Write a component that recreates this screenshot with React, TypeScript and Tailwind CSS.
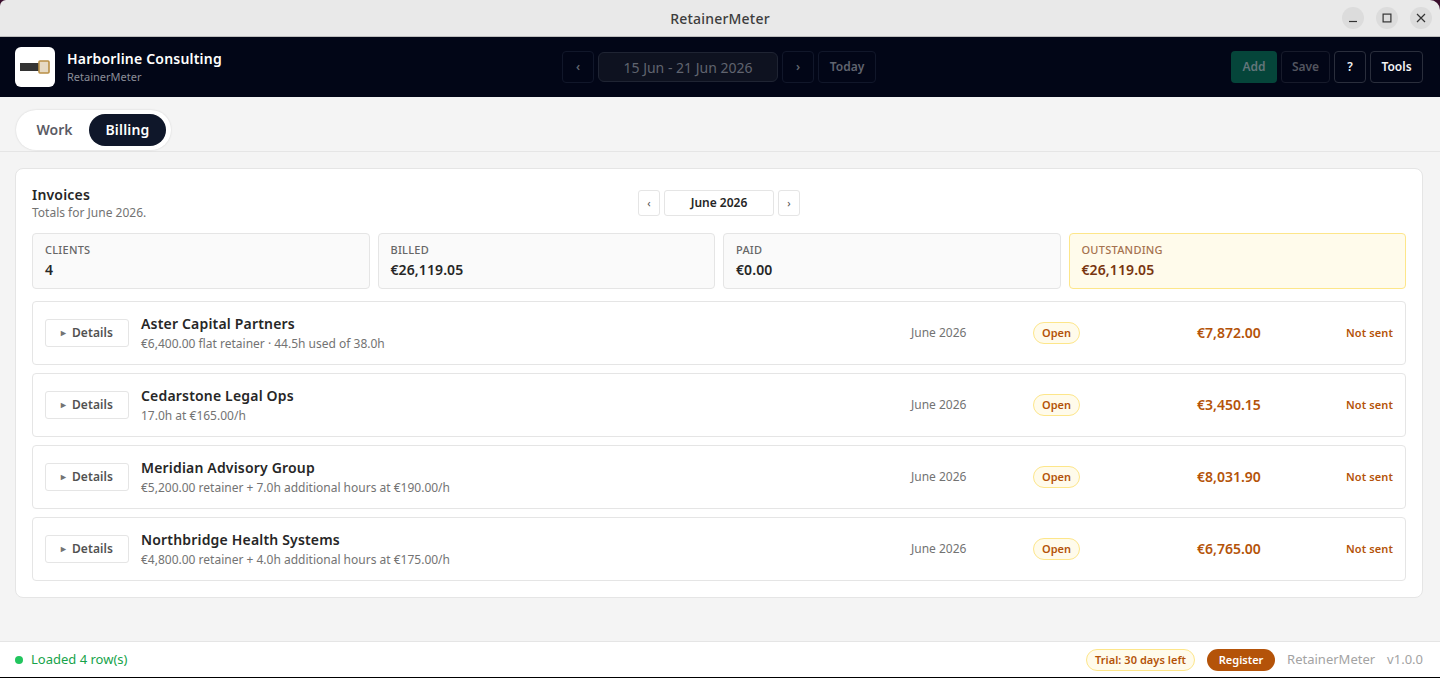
const invoices = [
  { name: 'Aster Capital Partners', detail: '€6,400.00 flat retainer · 44.5h used of 38.0h', amount: '€7,872.00' },
  { name: 'Cedarstone Legal Ops', detail: '17.0h at €165.00/h', amount: '€3,450.15' },
  { name: 'Meridian Advisory Group', detail: '€5,200.00 retainer + 7.0h additional hours at €190.00/h', amount: '€8,031.90' },
  { name: 'Northbridge Health Systems', detail: '€4,800.00 retainer + 4.0h additional hours at €175.00/h', amount: '€6,765.00' },
]

function StatCard({ label, value }: { label: string; value: string }) {
  return (
    <div className="flex-1 h-[56px] rounded-[4px] border border-[#e5e5e5] bg-[#fafafa] pl-[12px] pt-[8px]">
      <div className="text-[11px] leading-[16px] font-medium tracking-[0.25px] text-[#666666]">{label}</div>
      <div className="text-[14px] leading-[20px] mt-[2px] font-semibold tracking-[0.1px] text-[#262626]">{value}</div>
    </div>
  )
}

function InvoiceRow({ name, detail, amount }: { name: string; detail: string; amount: string }) {
  return (
    <div className="flex items-center h-[64px] rounded-[4px] border border-[#e5e5e5] bg-white pl-[12px] pr-[12px]">
      <button className="flex items-center justify-center gap-[4px] w-[84px] h-[28px] pr-[2px] rounded-[3px] border border-[#e5e5e5] bg-white text-[12px] font-semibold tracking-[0.1px] text-[#525252]">
        <span className="text-[9px] text-[#737373]">►</span>
        Details
      </button>
      <div className="ml-[12px] flex-1">
        <div className="text-[14px] leading-[18px] font-semibold tracking-[0.18px] text-[#262626]">{name}</div>
        <div className="text-[12px] leading-[16px] mt-[3px] text-[#737373]">{detail}</div>
      </div>
      <div className="w-[122px] text-[12px] text-[#737373]">June 2026</div>
      <div className="flex w-[164px]">
        <span className="inline-flex items-center h-[22px] px-[8px] rounded-full border border-[#fde68a] bg-[#fffbeb] text-[11px] font-semibold text-[#b45309]">
          Open
        </span>
      </div>
      <div className="w-[112px] text-[14px] leading-[20px] font-semibold text-[#b45309] whitespace-nowrap">{amount}</div>
      <div className="w-[84px] text-[11px] font-semibold tracking-[0.1px] text-[#b45309] text-right whitespace-nowrap">Not sent</div>
    </div>
  )
}

export default function App() {
  return (
    <div className="relative flex flex-col w-[1440px] h-[678px] overflow-hidden bg-[#3a0d2c] font-['Noto_Sans',sans-serif]">
      {/* Window title bar */}
      <div className="relative flex items-center justify-center h-[37px] shrink-0 rounded-tl-[6px] rounded-tr-[10px] bg-[#e9e9e9] border-b border-[#bdbdbd]">
        <span className="text-[14px] font-medium tracking-[0.2px] text-[#3d3d3d]">RetainerMeter</span>
        <div className="absolute right-[8px] top-[7px] flex gap-[12px]">
          <div className="flex items-center justify-center w-[22px] h-[22px] rounded-full bg-[#dcdcdc]">
            <svg width="12" height="12" viewBox="0 0 12 12" fill="none" stroke="#333333" strokeWidth="1.2">
              <path d="M2 9.5H10" />
            </svg>
          </div>
          <div className="flex items-center justify-center w-[22px] h-[22px] rounded-full bg-[#dcdcdc]">
            <svg width="12" height="12" viewBox="0 0 12 12" fill="none" stroke="#333333" strokeWidth="1.2">
              <rect x="2.1" y="2.1" width="7.8" height="7.8" />
            </svg>
          </div>
          <div className="flex items-center justify-center w-[22px] h-[22px] rounded-full bg-[#dcdcdc]">
            <svg width="12" height="12" viewBox="0 0 12 12" fill="none" stroke="#333333" strokeWidth="1.2">
              <path d="M2 2L10 10M10 2L2 10" />
            </svg>
          </div>
        </div>
      </div>

      {/* App header */}
      <div className="relative flex items-center justify-between h-[60px] shrink-0 bg-[#020617] px-[15px] pr-[17px]">
        <div className="flex items-center gap-[12px]">
          <div className="flex items-center justify-center w-[40px] h-[40px] rounded-[6px] bg-white">
            <svg width="30" height="14" viewBox="0 0 30 14">
              <rect x="0" y="3" width="20" height="8" fill="#333333" />
              <rect x="19" y="1" width="10" height="12" rx="1" fill="#e6d9c3" stroke="#b98f45" strokeWidth="1.6" />
            </svg>
          </div>
          <div>
            <div className="text-[14px] leading-[20px] font-semibold tracking-[0.2px] text-white">Harborline Consulting</div>
            <div className="text-[11px] leading-[16px] text-[#8a8d97]">RetainerMeter</div>
          </div>
        </div>

        <div className="absolute left-[562px] top-[14px] flex items-center gap-[4px]">
          <button className="w-[32px] h-[32px] rounded-[4px] border border-[#11172a] text-[12px] font-semibold text-[#60646f]">‹</button>
          <div className="flex items-center justify-center w-[180px] h-[30px] rounded-[6px] border border-[#1f2433] bg-[#0e1220] text-[14px] text-[#60646f]">
            15 Jun - 21 Jun 2026
          </div>
          <button className="w-[32px] h-[32px] rounded-[4px] border border-[#11172a] text-[12px] font-semibold text-[#60646f]">›</button>
          <button className="w-[58px] h-[32px] rounded-[4px] border border-[#11172a] text-[12px] font-semibold text-[#60646f]">Today</button>
        </div>

        <div className="flex items-center gap-[4px]">
          <button className="w-[46px] h-[32px] rounded-[4px] bg-[#05453a] text-[12px] font-semibold text-[#63767a]">Add</button>
          <button className="w-[49px] h-[32px] rounded-[4px] border border-[#171b2b] text-[12px] font-semibold text-[#52555f]">Save</button>
          <button className="w-[32px] h-[32px] rounded-[4px] border border-[#2a2e3c] text-[12px] font-semibold text-[#f3f4f6]">?</button>
          <button className="w-[53px] h-[32px] rounded-[4px] border border-[#2a2e3c] text-[12px] font-semibold text-[#f3f4f6]">Tools</button>
        </div>
      </div>

      {/* Tabs */}
      <div className="h-[55px] shrink-0 bg-[#f4f4f4] border-b border-[#e5e5e5] pl-[16px] pt-[13px]">
        <div className="flex items-center h-[40px] w-[155px] rounded-full bg-white shadow-[0_0_2px_rgba(0,0,0,0.15)] pl-[4px]">
          <div className="flex items-center justify-center w-[69px] pb-[2px] text-[14px] font-semibold text-[#5b5b65]">Work</div>
          <div className="flex items-center justify-center w-[77px] h-[32px] pb-[2px] rounded-full bg-[#0f172a] text-[14px] font-semibold tracking-[0.2px] text-white">Billing</div>
        </div>
      </div>

      {/* Billing content */}
      <div className="flex-1 bg-[#f4f4f4] px-[15px] pr-[17px] pt-[16px]">
        <div className="h-[430px] rounded-[8px] border border-[#e5e5e5] bg-white px-[16px] pt-[16px]">
          <div className="relative h-[48px]">
            <div className="text-[14px] leading-[20px] font-semibold tracking-[0.2px] text-[#262626]">Invoices</div>
            <div className="text-[12px] leading-[16px] text-[#737373]">Totals for June 2026.</div>
            <div className="absolute left-[606px] top-[5px] flex items-center gap-[4px]">
              <button className="w-[22px] h-[26px] rounded-[3px] border border-[#e5e5e5] text-[11px] text-[#525252]">‹</button>
              <div className="flex items-center justify-center w-[110px] h-[26px] rounded-[3px] border border-[#e5e5e5] text-[12px] font-semibold text-[#262626]">June 2026</div>
              <button className="w-[22px] h-[26px] rounded-[3px] border border-[#e5e5e5] text-[11px] text-[#525252]">›</button>
            </div>
          </div>

          <div className="flex gap-[8px]">
            <StatCard label="CLIENTS" value="4" />
            <StatCard label="BILLED" value="€26,119.05" />
            <StatCard label="PAID" value="€0.00" />
            <div className="flex-1 h-[56px] rounded-[4px] border border-[#fde68a] bg-[#fffbeb] pl-[12px] pt-[8px]">
              <div className="text-[11px] leading-[16px] font-medium tracking-[0.25px] text-[#a5724f]">OUTSTANDING</div>
              <div className="text-[14px] leading-[20px] mt-[2px] font-semibold tracking-[0.1px] text-[#78350f]">€26,119.05</div>
            </div>
          </div>

          <div className="flex flex-col gap-[8px] mt-[12px]">
            {invoices.map((inv) => (
              <InvoiceRow key={inv.name} {...inv} />
            ))}
          </div>
        </div>
      </div>

      {/* Status bar */}
      <div className="flex items-center justify-between h-[37px] shrink-0 bg-white border-t border-[#e5e5e5] pl-[15px] pr-[17px]">
        <div className="flex items-center gap-[8px]">
          <span className="w-[8px] h-[8px] rounded-full bg-[#22c55e]" />
          <span className="text-[13px] text-[#16a34a]">Loaded 4 row(s)</span>
        </div>
        <div className="flex items-center">
          <span className="inline-flex items-center h-[22px] px-[8px] rounded-full border border-[#fde68a] bg-[#fffbeb] text-[11px] font-semibold tracking-[0.05px] text-[#b45309]">
            Trial: 30 days left
          </span>
          <button className="ml-[12px] h-[22px] w-[68px] rounded-full bg-[#b45309] text-[11px] font-semibold text-white">Register</button>
          <span className="ml-[12px] text-[13px] text-[#a3a3a3]">RetainerMeter</span>
          <span className="ml-[12px] text-[13px] text-[#a3a3a3]">v1.0.0</span>
        </div>
      </div>
      <div className="absolute left-0 right-0 bottom-0 h-[1px] bg-black" />
    </div>
  )
}
